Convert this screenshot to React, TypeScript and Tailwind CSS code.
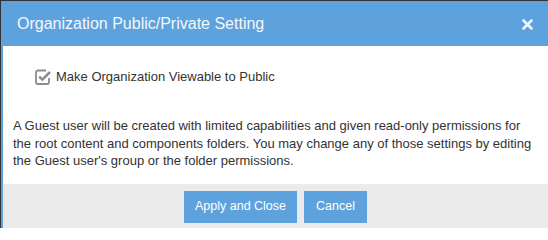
export default function App() {
  return (
    <div className="h-[228px] w-[548px] overflow-hidden bg-[#333] pt-px pl-px font-['Liberation_Sans',Arial,sans-serif]">
      <div className="flex h-[227px] flex-col border-l-2 border-[#5ea2dd] bg-white">
        <div className="flex h-[45px] shrink-0 items-center justify-between bg-[#5ea2dd] pr-[15px] pl-[14px]">
          <h1 className="text-[16px] leading-none text-[#f3f7fb]">
            Organization Public/Private Setting
          </h1>
          <svg width="11" height="11" viewBox="0 0 11 11" className="mt-px">
            <path
              d="M1.5 1.5 L9.5 9.5 M9.5 1.5 L1.5 9.5"
              stroke="#eef4fa"
              strokeWidth="2.6"
              strokeLinecap="round"
            />
          </svg>
        </div>

        <div className="px-[10px] pt-[22px] pb-[14px] text-[13px] text-[#333]">
          <label className="flex items-center gap-[4px] pl-[22px] leading-[18px]">
            <svg width="17" height="16" viewBox="0 0 17 16">
              <path
                d="M11 1.5 H3 a2 2 0 0 0 -2 2 V13 a2 2 0 0 0 2 2 H12 a2 2 0 0 0 2 -2 V9"
                fill="none"
                stroke="#8c8c8c"
                strokeWidth="1.8"
              />
              <path
                d="M4.2 7.6 L7.4 10.6 L15 3"
                fill="none"
                stroke="#8c8c8c"
                strokeWidth="2.5"
              />
            </svg>
            <span>Make Organization Viewable to Public</span>
          </label>

          <p className="mt-[31px] leading-[17.5px]">
            A Guest user will be created with limited capabilities and given
            read-only permissions for the root content and components folders.
            You may change any of those settings by editing the Guest user's
            group or the folder permissions.
          </p>
        </div>

        <div className="flex flex-1 justify-center gap-[7px] bg-[#ebebeb] pt-[7px]">
          <button className="h-[32px] w-[113px] bg-[#5ea2dd] text-[12.5px] text-white">
            Apply and Close
          </button>
          <button className="h-[32px] w-[63px] bg-[#5ea2dd] text-[12.5px] text-white">
            Cancel
          </button>
        </div>
      </div>
    </div>
  )
}
